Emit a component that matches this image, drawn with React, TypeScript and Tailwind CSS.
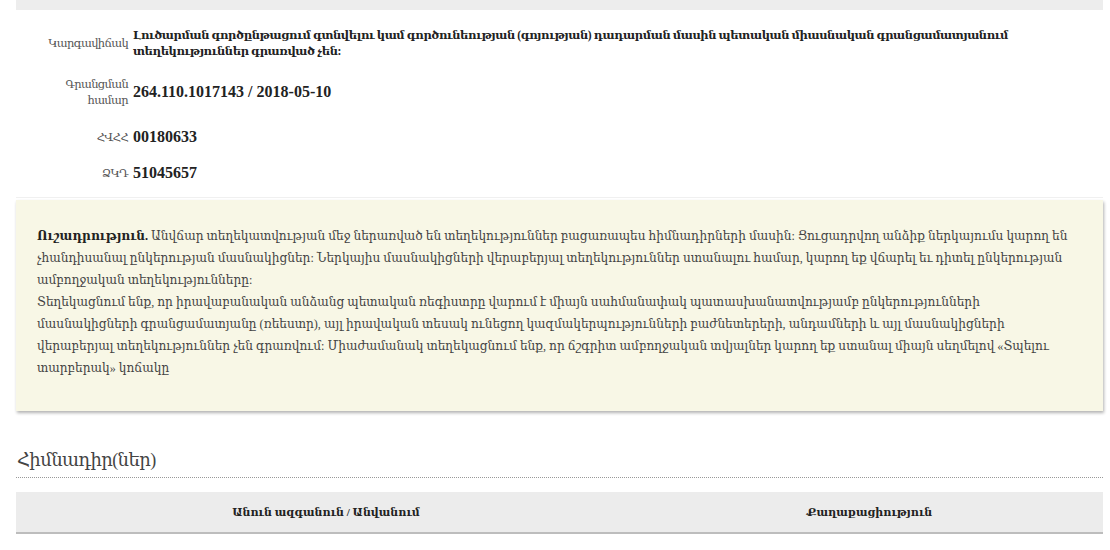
import React from "react";

const F = { fontFamily: '"Liberation Serif", "DejaVu Serif", serif' };

export default function App() {
  return (
    <div className="w-[1110px] h-[550px] overflow-hidden bg-white text-[#333]" style={F}>
      <div className="mx-[16px] w-[1087px]">
        <div className="h-[10px] bg-[#ededed]" />
        {/* definition list */}
        <div className="pt-[7px] pb-[10px] border-b border-[#f0f0f0]">
          <div className="flex items-center py-[10px]">
            <div className="w-[117px] shrink-0 text-right text-[11.5px] tracking-[-0.7px] leading-[16px] text-[#555] pr-[5px]">Կարգավիճակ</div>
            <div className="text-[11.5px] tracking-[-0.4px] leading-[16px] font-bold text-[#222]">
              <div className="whitespace-nowrap">Լուծարման գործընթացում գտնվելու կամ գործունեության (գոյության) դադարման մասին պետական միասնական գրանցամատյանում</div>
              <div className="whitespace-nowrap">տեղեկություններ գրառված չեն:</div>
            </div>
          </div>
          <div className="flex items-center py-[7px]">
            <div className="w-[117px] shrink-0 text-right text-[11.5px] tracking-[-0.7px] leading-[16px] text-[#555] pr-[5px]">Գրանցման<br />համար</div>
            <div className="text-[16px] leading-[16px] font-bold text-[#222]">264.110.1017143 / 2018-05-10</div>
          </div>
          <div className="flex items-center py-[14px]">
            <div className="w-[117px] shrink-0 text-right text-[11.5px] tracking-[-0.7px] leading-[16px] text-[#555] pr-[5px]">ՀՎՀՀ</div>
            <div className="text-[16px] leading-[16px] font-bold text-[#222]">00180633</div>
          </div>
          <div className="flex items-center py-[6px]">
            <div className="w-[117px] shrink-0 text-right text-[11.5px] tracking-[-0.7px] leading-[16px] text-[#555] pr-[5px]">ՁԿԴ</div>
            <div className="text-[16px] leading-[16px] font-bold text-[#222]">51045657</div>
          </div>
        </div>
        {/* note */}
        <div className="mt-[2px] bg-[#f8f7e6] shadow-[1px_2px_3px_rgba(0,0,0,0.3)] px-[21px] pt-[25px] pb-[32px] text-[12.15px] leading-[22px] text-[#444]">
          <div className="whitespace-nowrap"><span className="font-bold text-[#222]">Ուշադրություն.</span> Անվճար տեղեկատվության մեջ ներառված են տեղեկություններ բացառապես հիմնադիրների մասին: Ցուցադրվող անձիք ներկայումս կարող են</div>
          <div className="whitespace-nowrap">չհանդիսանալ ընկերության մասնակիցներ: Ներկայիս մասնակիցների վերաբերյալ տեղեկություններ ստանալու համար, կարող եք վճարել եւ դիտել ընկերության</div>
          <div className="whitespace-nowrap">ամբողջական տեղեկությունները:</div>
          <div className="whitespace-nowrap">Տեղեկացնում ենք, որ իրավաբանական անձանց պետական ռեգիստրը վարում է միայն սահմանափակ պատասխանատվությամբ ընկերությունների</div>
          <div className="whitespace-nowrap">մասնակիցների գրանցամատյանը (ռեեստր), այլ իրավական տեսակ ունեցող կազմակերպությունների բաժնետերերի, անդամների և այլ մասնակիցների</div>
          <div className="whitespace-nowrap">վերաբերյալ տեղեկություններ չեն գրառվում: Միաժամանակ տեղեկացնում ենք, որ ճշգրիտ ամբողջական տվյալներ կարող եք ստանալ միայն սեղմելով «Տպելու</div>
          <div className="whitespace-nowrap">տարբերակ» կոճակը</div>
        </div>
        {/* founders */}
        <div className="mt-[36px] border-b border-dotted border-[#999] pb-[4px] text-[18px] tracking-[-0.6px] leading-[26px] text-[#444] pl-[1px]">Հիմնադիր(ներ)</div>
        <div className="mt-[14px] flex bg-[#ececec] border-b-2 border-[#bdbdbd] h-[42px] items-center text-[11px] font-bold text-[#222]">
          <div className="w-[620px] text-center">Անուն ազգանուն / Անվանում</div>
          <div className="flex-1 text-center">Քաղաքացիություն</div>
        </div>
      </div>
    </div>
  );
}
